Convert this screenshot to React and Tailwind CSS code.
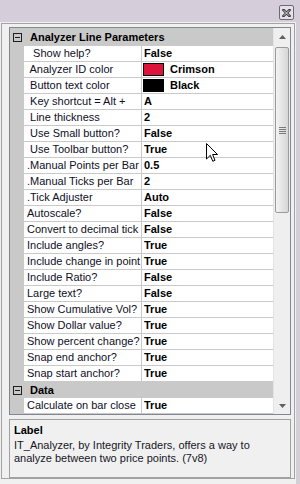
import React from 'react'

const rows = [
  ['  Show help?', 'False'],
  [' Analyzer ID color', 'Crimson', '#dc143c'],
  [' Button text color', 'Black', '#000000'],
  [' Key shortcut = Alt +', 'A'],
  [' Line thickness', '2'],
  [' Use Small button?', 'False'],
  [' Use Toolbar button?', 'True'],
  ['.Manual Points per Bar', '0.5'],
  ['.Manual Ticks per Bar', '2'],
  ['.Tick Adjuster', 'Auto'],
  ['Autoscale?', 'False'],
  ['Convert to decimal tick', 'False'],
  ['Include angles?', 'True'],
  ['Include change in point', 'True'],
  ['Include Ratio?', 'False'],
  ['Large text?', 'False'],
  ['Show Cumulative Vol?', 'True'],
  ['Show Dollar value?', 'True'],
  ['Show percent change?', 'True'],
  ['Snap end anchor?', 'True'],
  ['Snap start anchor?', 'True'],
]

function Category({ title, tall }) {
  return (
    <div className={`flex items-center bg-[#c9c9c9] ${tall ? 'h-[18px]' : 'h-[16px]'}`}>
      <div className="w-[14px] flex justify-center">
        <div className="w-[9px] h-[9px] border border-[#1e1e1e] flex items-center justify-center">
          <div className="w-[5px] h-px bg-[#1e1e1e]" />
        </div>
      </div>
      <span className="pl-[6px] font-bold text-black leading-none">{title}</span>
    </div>
  )
}

function Row({ label, value, swatch }) {
  return (
    <div className="flex h-[16px]">
      <div className="w-[14px] bg-[#c9c9c9]" />
      <div className="w-[117px] bg-white border-b border-[#c9c9c9] overflow-hidden whitespace-pre pl-[3px] leading-[15px] text-[#0e0e26]">
        {label}
      </div>
      <div className="flex-1 bg-white border-b border-l border-[#c9c9c9] flex items-center overflow-hidden whitespace-nowrap leading-[15px] font-bold text-black">
        {swatch ? (
          <>
            <div className="ml-px w-[21px] h-[13px] border border-black" style={{ backgroundColor: swatch }} />
            <span className="pl-[6px]">{value}</span>
          </>
        ) : (
          <span className="pl-[2px]">{value}</span>
        )}
      </div>
    </div>
  )
}

function Scrollbar() {
  return (
    <div className="w-[17px] bg-[#efefef] border-l border-[#e4e4e4] flex flex-col">
      <div className="h-[17px] flex items-center justify-center">
        <svg width="7" height="4" viewBox="0 0 7 4">
          <path d="M3.5 0 L7 4 L0 4 Z" fill="#606060" />
        </svg>
      </div>
      <div className="flex-1 flex flex-col">
        <div className="mt-[2px] mx-px h-[166px] rounded-[2px] border border-[#9a9a9a] bg-gradient-to-r from-[#f3f3f3] to-[#d6d6d6] flex items-center justify-center">
          <div className="flex flex-col gap-px">
            <div className="w-[7px] h-px bg-[#7a7a7a]" />
            <div className="w-[7px] h-px bg-[#7a7a7a]" />
            <div className="w-[7px] h-px bg-[#7a7a7a]" />
            <div className="w-[7px] h-px bg-[#7a7a7a]" />
          </div>
        </div>
      </div>
      <div className="h-[17px] flex items-center justify-center">
        <svg width="7" height="4" viewBox="0 0 7 4">
          <path d="M0 0 L7 0 L3.5 4 Z" fill="#606060" />
        </svg>
      </div>
    </div>
  )
}

export default function App() {
  return (
    <div className="relative w-[300px] h-[484px] overflow-hidden bg-[#d6cdda] text-[11px] font-['Liberation_Sans',Arial,sans-serif] flex flex-col">
      <div className="h-[22px] flex justify-end items-start pt-[5px] pr-[6px]">
        <div className="w-[15px] h-[15px] rounded-[2px] border border-[#6e6a72] bg-[#e6e0ea] flex items-center justify-center">
          <svg width="9" height="8" viewBox="0 0 9 8">
            <path d="M1.5 1 L7.5 7 M7.5 1 L1.5 7" stroke="#3a3a3a" strokeWidth="2.6" strokeLinecap="square" />
            <path d="M1.8 1.3 L7.2 6.7 M7.2 1.3 L1.8 6.7" stroke="#f4f4f4" strokeWidth="0.9" />
          </svg>
        </div>
      </div>

      <div className="w-[296px] flex-1 bg-[#f0f0f0] pt-px pl-px">
        <div className="w-[294px] h-[456px] border border-[#a3a3a3] pt-[3px] px-[7px]">
          <div className="w-[282px] h-[388px] border border-[#82878f] flex bg-[#c9c9c9]">
            <div className="flex-1 flex flex-col">
              <Category title="Analyzer Line Parameters" tall />
              {rows.map(([label, value, swatch]) => (
                <Row key={label} label={label} value={value} swatch={swatch} />
              ))}
              <Category title="Data" />
              <Row label="Calculate on bar close" value="True" />
            </div>
            <Scrollbar />
          </div>

          <div className="mt-[4px] w-[282px] h-[59px] border border-[#a0a0a0] pt-[4px] pl-[4px] pr-[3px] text-[#161626] leading-[13px]">
            <div className="font-bold text-black mb-[2px]">Label</div>
            <p>IT_Analyzer, by Integrity Traders, offers a way to analyze between two price points. (7v8)</p>
          </div>
        </div>
      </div>

      <svg className="absolute left-[206px] top-[143px]" width="13" height="20" viewBox="0 0 13 20">
        <path d="M0.5 0.5 L0.5 16 L4.3 12.3 L6.8 18.3 L9 17.3 L6.6 11.5 L11.5 11.5 Z" fill="#ffffff" stroke="#000000" strokeWidth="1" strokeLinejoin="miter" />
      </svg>
    </div>
  )
}
